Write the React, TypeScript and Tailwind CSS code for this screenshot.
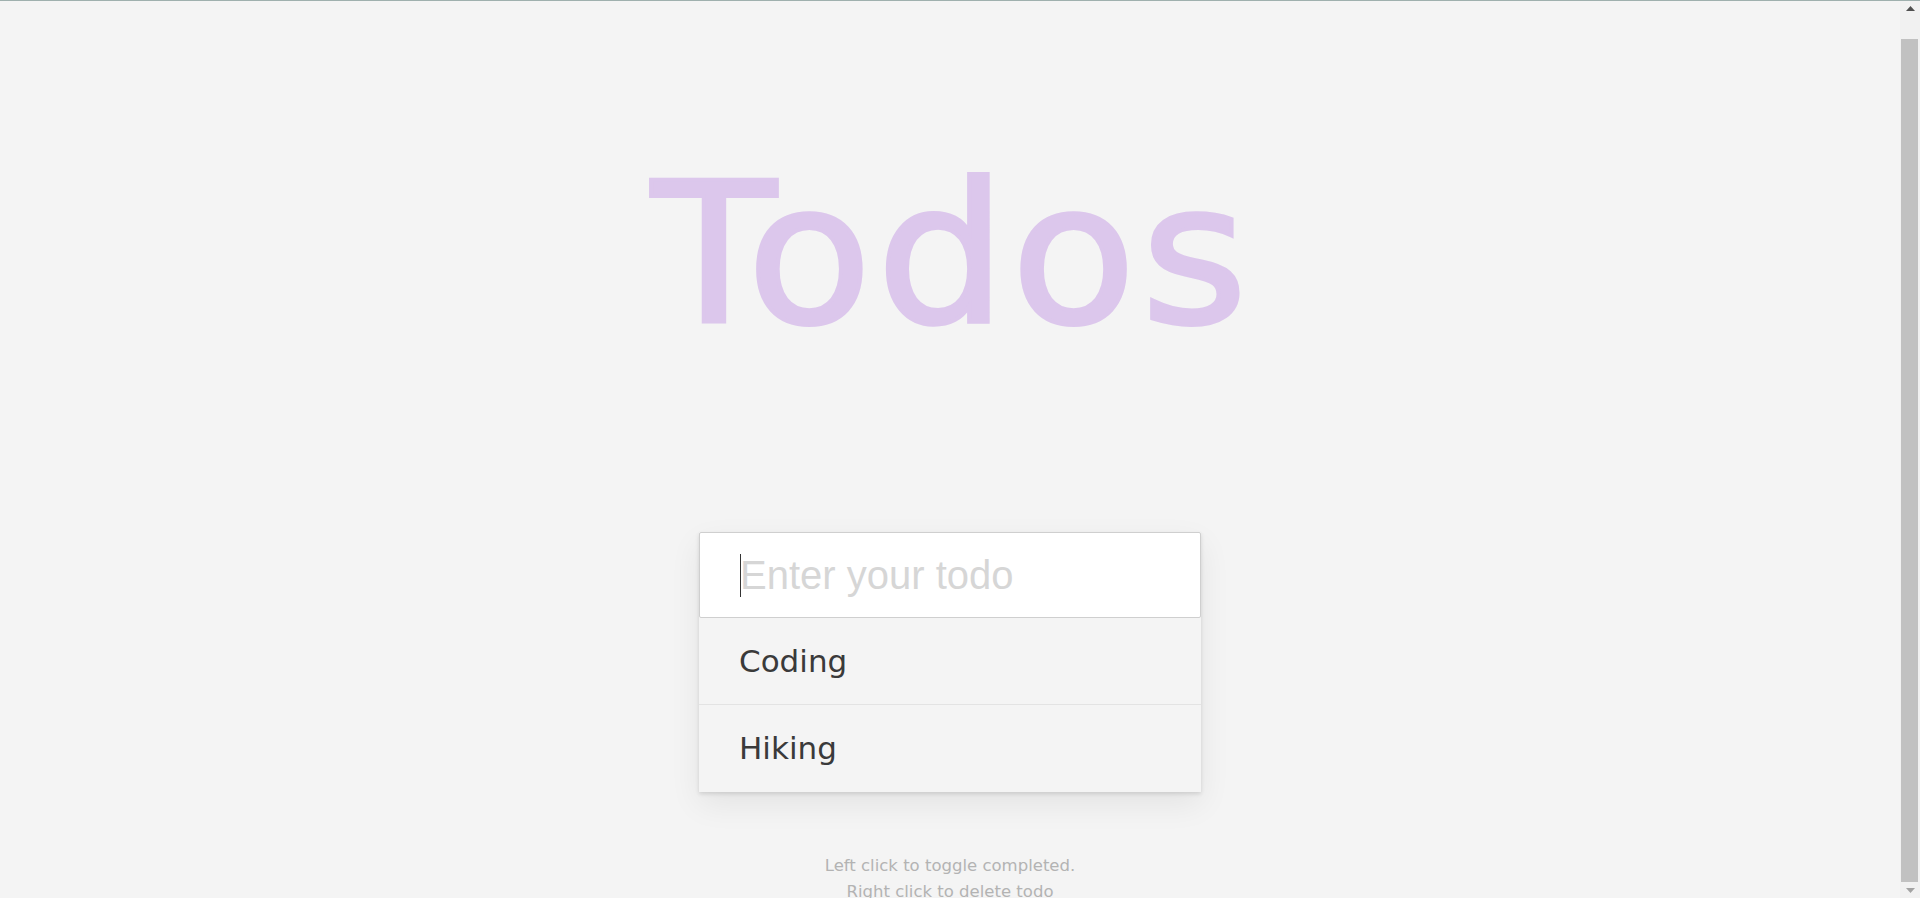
import React from "react";

function Scrollbar() {
  return (
    <div className="w-[20px] h-[897px] bg-[#f1f1f1] flex flex-col shrink-0">
      <div className="h-[17px] flex items-center justify-center pb-[2px]">
        <svg width="9" height="5" viewBox="0 0 9 5">
          <polygon points="0,5 9,5 4.5,0" fill="#505050" />
        </svg>
      </div>
      <div className="h-[21px]" />
      <div className="flex-1 ml-[1px] w-[17px] bg-[#c1c1c1]" />
      <div className="h-[16px] flex items-center justify-center">
        <svg width="9" height="5" viewBox="0 0 9 5">
          <polygon points="0,0 9,0 4.5,5" fill="#a3a3a3" />
        </svg>
      </div>
    </div>
  );
}

export default function App() {
  return (
    <div className="h-[898px] w-full overflow-hidden bg-[#f4f4f4] border-t border-[#9fb0ae] flex flex-row">
      <main className="flex-1 h-[897px] overflow-hidden flex flex-col items-center font-['DejaVu_Sans',sans-serif]">
        <h1 className="mt-[157px] pl-[5px] text-[194px] leading-none font-normal tracking-[5px] scale-x-[1.05] text-[#dcc7ec] [-webkit-text-stroke:4px_#dcc7ec] select-none">
          Todos
        </h1>
        <div className="mt-[180px] w-[502px] shadow-[0_2px_4px_rgba(0,0,0,0.12),0_12px_30px_rgba(0,0,0,0.07)]">
          <div className="h-[86px] bg-white border border-[#cfcfcf] rounded-[2px] flex items-center pl-[40px] relative">
            <span className="absolute left-[40px] top-[21px] w-px h-[43px] bg-[#333]" />
            <input
              className="w-full outline-none bg-transparent text-[40px] font-['Liberation_Sans',Arial,sans-serif] text-[#444] placeholder:text-[#d6d6d6] caret-transparent"
              placeholder="Enter your todo"
            />
          </div>
          <ul>
            <li className="h-[87px] flex items-center pl-[40px] text-[31px] text-[#3a3a3a] bg-[#f4f4f4] border-b border-[#e3e3e3]">
              Coding
            </li>
            <li className="h-[87px] flex items-center pl-[40px] text-[31px] text-[#3a3a3a] bg-[#f4f4f4]">
              Hiking
            </li>
          </ul>
        </div>
        <div className="mt-[61px] shrink-0 text-center text-[16.5px] leading-[26px] text-[#b3b3b3]">
          <p>Left click to toggle completed.</p>
          <p>Right click to delete todo</p>
        </div>
      </main>
      <Scrollbar />
    </div>
  );
}
